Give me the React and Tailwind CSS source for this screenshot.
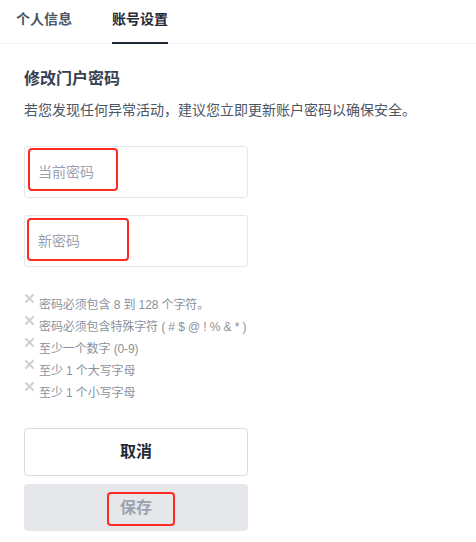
import React from "react";

const rules = [
  "密码必须包含 8 到 128 个字符。",
  "密码必须包含特殊字符 ( # $ @ ! % & * )",
  "至少一个数字 (0-9)",
  "至少 1 个大写字母",
  "至少 1 个小写字母",
];

function XIcon() {
  return (
    <svg width="9" height="9" viewBox="0 0 9 9" className="shrink-0 self-start mt-[-2px]">
      <path d="M1 1 L8 8 M8 1 L1 8" stroke="#cdd0d5" strokeWidth="2" strokeLinecap="square" />
    </svg>
  );
}

export default function App() {
  return (
    <div
      className="w-[476px] h-[542px] bg-white overflow-hidden"
      style={{ fontFamily: '"Liberation Sans", "Noto Sans CJK SC", sans-serif' }}
    >
      {/* Tabs */}
      <div className="h-[44px] border-b border-[#f1f2f4] flex pl-[16px] gap-[40px]">
        <div className="h-full flex items-start pt-[10px] text-[14px] leading-[18px] font-semibold text-[#4b5563]">
          个人信息
        </div>
        <div className="h-full relative flex items-start pt-[10px] text-[14px] leading-[18px] font-semibold text-[#1f2937]">
          账号设置
          <div className="absolute left-0 right-0 bottom-[-1px] h-[2px] bg-[#1f2a37]" />
        </div>
      </div>

      <div className="pl-[24px] pt-[23px]">
        <div className="text-[16px] leading-[24px] font-bold text-[#374151]">修改门户密码</div>
        <div className="mt-[9px] text-[14px] leading-[20px] text-[#4b5563]">
          若您发现任何异常活动，建议您立即更新账户密码以确保安全。
        </div>

        <div className="mt-[26px] relative w-[224px] h-[52px] border border-[#e5e7eb] rounded-[3px] flex items-center pl-[13px]">
          <span className="text-[14px] leading-[20px] text-[#98a2b0]">当前密码</span>
          <div className="absolute left-[3px] top-[1px] w-[90px] h-[43px] border-2 border-[#ff2a1f] rounded-[4px]" />
        </div>

        <div className="mt-[17px] relative w-[224px] h-[52px] border border-[#e5e7eb] rounded-[3px] flex items-center pl-[13px]">
          <span className="text-[14px] leading-[20px] text-[#98a2b0]">新密码</span>
          <div className="absolute left-[2px] top-[2px] w-[102px] h-[43px] border-2 border-[#ff2a1f] rounded-[4px]" />
        </div>

        <div className="mt-[29px] flex flex-col gap-[4px]">
          {rules.map((r) => (
            <div key={r} className="flex items-center gap-[5px] h-[18px] pl-[1px]">
              <XIcon />
              <span className="text-[12px] leading-[18px] text-[#8b929c] tracking-[-0.1px]">{r}</span>
            </div>
          ))}
        </div>

        <div className="mt-[26px] w-[224px] h-[48px] border border-[#d9dce1] rounded-[4px] flex items-center justify-center text-[16px] font-bold text-[#1f2937]">
          取消
        </div>
        <div className="mt-[8px] relative w-[224px] h-[47px] bg-[#e5e7eb] rounded-[4px] flex items-center justify-center text-[16px] font-bold text-[#9ca3af]">
          保存
          <div className="absolute left-[83px] top-[8px] w-[68px] h-[34px] border-2 border-[#ff2a1f] rounded-[4px]" />
        </div>
      </div>
    </div>
  );
}
